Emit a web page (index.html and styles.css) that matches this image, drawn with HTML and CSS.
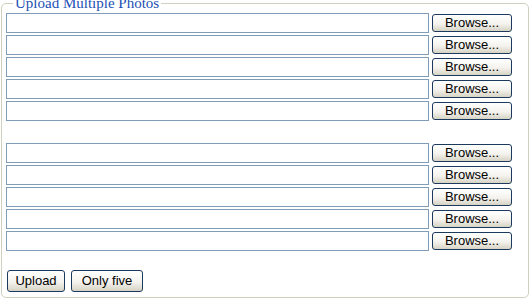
FILE: index.html
```html
<!DOCTYPE html>
<html lang="en">
<head>
    <meta charset="UTF-8">
    <title>Upload Multiple Photos</title>
    <link rel="stylesheet" href="styles.css">
</head>
<body>
    <form class="upload-form">
        <fieldset class="box">
            <legend>Upload Multiple Photos</legend>

            <div class="group">
                <div class="file-row"><input type="text" class="file-path"><button type="button" class="browse">Browse...</button></div>
                <div class="file-row"><input type="text" class="file-path"><button type="button" class="browse">Browse...</button></div>
                <div class="file-row"><input type="text" class="file-path"><button type="button" class="browse">Browse...</button></div>
                <div class="file-row"><input type="text" class="file-path"><button type="button" class="browse">Browse...</button></div>
                <div class="file-row"><input type="text" class="file-path"><button type="button" class="browse">Browse...</button></div>
            </div>

            <div class="group">
                <div class="file-row"><input type="text" class="file-path"><button type="button" class="browse">Browse...</button></div>
                <div class="file-row"><input type="text" class="file-path"><button type="button" class="browse">Browse...</button></div>
                <div class="file-row"><input type="text" class="file-path"><button type="button" class="browse">Browse...</button></div>
                <div class="file-row"><input type="text" class="file-path"><button type="button" class="browse">Browse...</button></div>
                <div class="file-row"><input type="text" class="file-path"><button type="button" class="browse">Browse...</button></div>
            </div>

            <div class="actions">
                <button type="submit" class="btn btn-upload">Upload</button>
                <button type="button" class="btn btn-five">Only five</button>
            </div>
        </fieldset>
    </form>
</body>
</html>
```

FILE: styles.css
```css
body {
    margin: 0;
    background-color: #ffffff;
    font-family: "Liberation Sans", Arial, sans-serif;
    font-size: 13px;
}

.upload-form {
    margin: 0;
}

.box {
    margin: -6px 0 0 1px;
    width: 518px;
    padding: 0 4px 5px 4px;
    border: 1px solid #d0d0bf;
    border-radius: 5px;
}

.box legend {
    margin-left: 7px;
    padding: 0 2px;
    font-family: "Liberation Serif", "Times New Roman", serif;
    font-size: 15px;
    line-height: 18px;
    color: #1c4fb5;
}

.group {
    display: flex;
    flex-direction: column;
    gap: 2px;
    margin-top: 1px;
}

.group + .group {
    margin-top: 22px;
}

.file-row {
    display: flex;
    align-items: center;
    gap: 3px;
}

.file-path {
    box-sizing: border-box;
    width: 423px;
    height: 20px;
    margin: 0;
    padding: 1px 2px;
    border: 1px solid #7f9db9;
    background-color: #ffffff;
    font: inherit;
}

.browse,
.btn {
    box-sizing: border-box;
    margin: 0;
    padding: 0;
    border: 1px solid #1c3a5e;
    border-radius: 3px;
    background: linear-gradient(#ffffff, #f4f3ee 55%, #d6d2c4);
    color: #000000;
    font: inherit;
    line-height: 16px;
    text-align: center;
}

.browse {
    width: 80px;
    height: 18px;
}

.actions {
    display: flex;
    gap: 6px;
    margin: 19px 0 0 1px;
}

.btn {
    height: 22px;
}

.btn-upload {
    width: 58px;
}

.btn-five {
    width: 72px;
}
```
